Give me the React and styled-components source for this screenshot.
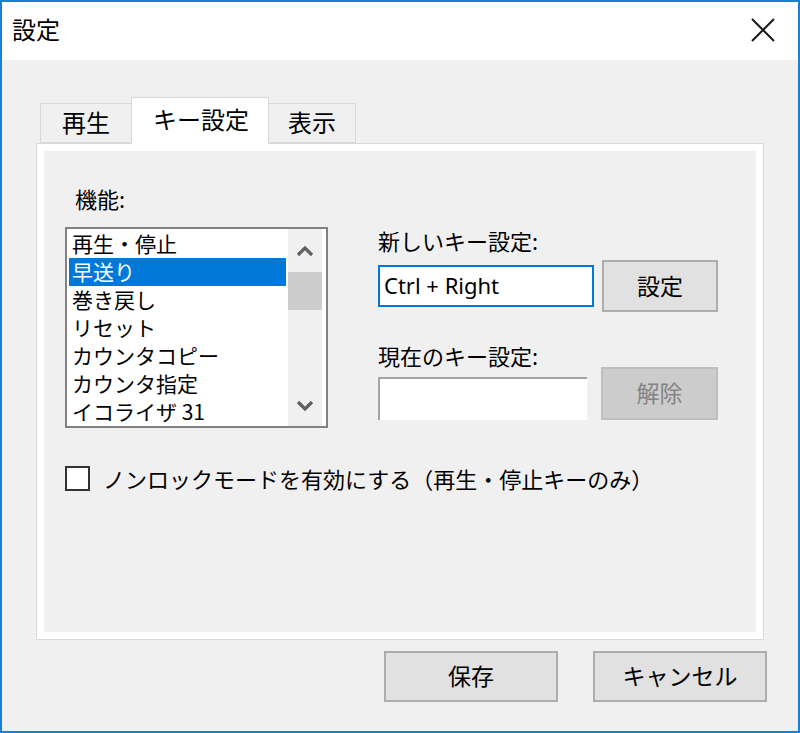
import React, { useState } from 'react'
import styled, { createGlobalStyle } from 'styled-components'

const Global = createGlobalStyle`
  html, body { margin: 0; padding: 0; background: #ffffff; }
  * { box-sizing: border-box; }
  body { font-family: "Noto Sans CJK JP", "Noto Sans", sans-serif; color: #000; }
`

const Window = styled.div`
  width: 800px;
  height: 733px;
  border: 2px solid #1b7fd6;
  display: flex;
  flex-direction: column;
  background: #f0f0f0;
`
const TitleBar = styled.div`
  height: 58px;
  background: #ffffff;
  display: flex;
  align-items: center;
  justify-content: space-between;
  padding: 0 22px 5px 10px;
  font-size: 24px;
`
const CloseBtn = styled.div`
  width: 26px;
  height: 26px;
  display: flex;
  align-items: center;
  justify-content: center;
  margin-top: 2px;
`
const Body = styled.div`
  flex: 1;
  display: flex;
  flex-direction: column;
  padding: 37px 0 0 34px;
`
const TabRow = styled.div`
  display: flex;
  align-items: flex-end;
  height: 46px;
  padding-left: 4px;
  position: relative;
  z-index: 1;
`
const Tab = styled.div`
  height: ${(p) => (p.$active ? '47px' : '40px')};
  margin-bottom: ${(p) => (p.$active ? '-1px' : '0')};
  width: ${(p) => p.$w}px;
  background: ${(p) => (p.$active ? '#ffffff' : '#f0f0f0')};
  border: 1px solid #d9d9d9;
  border-bottom: ${(p) => (p.$active ? 'none' : '1px solid #d9d9d9')};
  margin-left: ${(p) => (p.$active ? '-1px' : '0')};
  margin-right: ${(p) => (p.$active ? '-1px' : '0')};
  display: flex;
  align-items: center;
  justify-content: center;
  font-size: 24px;
  line-height: 1;
  padding-bottom: ${(p) => (p.$active ? '5px' : '2px')};
  padding-left: ${(p) => (p.$active ? '2px' : '0')};
`
const Panel = styled.div`
  width: 728px;
  height: 497px;
  border: 1px solid #d9d9d9;
  background: #ffffff;
  padding: 7px;
`
const Page = styled.div`
  height: 100%;
  background: #f0f0f0;
  padding: 33px 0 0 21px;
  display: flex;
  flex-direction: column;
`
const TopRow = styled.div`
  display: flex;
`
const LeftCol = styled.div`
  display: flex;
  flex-direction: column;
`
const Label = styled.div`
  font-size: 22px;
  line-height: ${(p) => p.$lh || 28}px;
  padding-left: ${(p) => p.$indent || 0}px;
  margin-bottom: ${(p) => p.$mb || 0}px;
  margin-top: ${(p) => p.$mt || 0}px;
`
const ListBox = styled.div`
  width: 263px;
  height: 201px;
  border: 2px solid #828282;
  background: #ffffff;
  display: flex;
`
const Items = styled.div`
  flex: 1;
  padding: 1px 2px 0 2px;
  overflow: hidden;
`
const Item = styled.div`
  height: 28px;
  line-height: 27px;
  font-size: 21px;
  padding-left: 3px;
  white-space: nowrap;
  background: ${(p) => (p.$sel ? '#0078d7' : 'transparent')};
  color: ${(p) => (p.$sel ? '#ffffff' : '#000000')};
`
const ScrollBar = styled.div`
  width: 34px;
  margin-right: 4px;
  background: #f0f0f0;
  display: flex;
  flex-direction: column;
`
const Arrow = styled.div`
  height: ${(p) => p.$h}px;
  display: flex;
  align-items: center;
  justify-content: center;
`
const Track = styled.div`
  flex: 1;
`
const Thumb = styled.div`
  height: 38px;
  background: #cdcdcd;
`
const RightCol = styled.div`
  margin-left: 50px;
  margin-top: 44px;
  display: flex;
  flex-direction: column;
`
const FieldRow = styled.div`
  display: flex;
  align-items: ${(p) => p.$align || 'center'};
  gap: ${(p) => p.$gap}px;
  margin-top: ${(p) => p.$mt || 0}px;
`
const TextBox = styled.div`
  width: ${(p) => p.$w}px;
  height: ${(p) => p.$h}px;
  background: #ffffff;
  border: ${(p) => (p.$focus ? '2px solid #0078d7' : 'none')};
  border-top: ${(p) => (p.$focus ? '2px solid #0078d7' : '2px solid #a3a3a3')};
  border-left: ${(p) => (p.$focus ? '2px solid #0078d7' : '2px solid #a3a3a3')};
  font-family: "Noto Sans", "Noto Sans CJK JP", sans-serif;
  font-size: 22px;
  display: flex;
  align-items: center;
  padding-left: 4px;
  padding-bottom: 2px;
`
const Button = styled.div`
  width: ${(p) => p.$w}px;
  height: ${(p) => p.$h}px;
  background: ${(p) => (p.$disabled ? '#cccccc' : '#e1e1e1')};
  border: 2px solid ${(p) => (p.$disabled ? '#bfbfbf' : '#adadad')};
  color: ${(p) => (p.$disabled ? '#838383' : '#000000')};
  display: flex;
  align-items: center;
  justify-content: center;
  font-size: 23px;
  padding-bottom: 3px;
`
const CheckRow = styled.div`
  display: flex;
  align-items: center;
  gap: 13px;
  margin-top: 34px;
  font-size: 22px;
`
const CheckBox = styled.div`
  width: 25px;
  height: 25px;
  border: 2px solid #333333;
  background: #ffffff;
`
const Footer = styled.div`
  display: flex;
  justify-content: flex-end;
  gap: 35px;
  margin-top: 11px;
  padding-right: 31px;
`

const Chevron = ({ up }) => (
  <svg width="18" height="12" viewBox="0 0 18 12">
    <path
      d={up ? 'M2 10 L9 3 L16 10' : 'M2 2 L9 9 L16 2'}
      fill="none"
      stroke="#606060"
      strokeWidth="3.2"
    />
  </svg>
)

const functions = [
  '再生・停止',
  '早送り',
  '巻き戻し',
  'リセット',
  'カウンタコピー',
  'カウンタ指定',
  'イコライザ 31',
]

const App = () => {
  const [selected, setSelected] = useState(1)
  return (
    <Window>
      <Global />
      <TitleBar>
        <span>設定</span>
        <CloseBtn>
          <svg width="26" height="26" viewBox="0 0 26 26">
            <path d="M2 2 L24 24 M24 2 L2 24" stroke="#1a1a1a" strokeWidth="2" />
          </svg>
        </CloseBtn>
      </TitleBar>
      <Body>
        <TabRow>
          <Tab $w={92}>再生</Tab>
          <Tab $w={138} $active>キー設定</Tab>
          <Tab $w={88}>表示</Tab>
        </TabRow>
        <Panel>
          <Page>
            <TopRow>
              <LeftCol>
                <Label $indent={10} $mb={15}>機能:</Label>
                <ListBox>
                  <Items>
                    {functions.map((f, i) => (
                      <Item key={f} $sel={i === selected} onClick={() => setSelected(i)}>
                        {f}
                      </Item>
                    ))}
                  </Items>
                  <ScrollBar>
                    <Arrow $h={43}><Chevron up /></Arrow>
                    <Track><Thumb /></Track>
                    <Arrow $h={40}><Chevron /></Arrow>
                  </ScrollBar>
                </ListBox>
              </LeftCol>
              <RightCol>
                <Label $lh={24}>新しいキー設定:</Label>
                <FieldRow $gap={8} $mt={8}>
                  <TextBox $w={216} $h={42} $focus>Ctrl + Right</TextBox>
                  <Button $w={116} $h={52}>設定</Button>
                </FieldRow>
                <Label $lh={24} $mt={31}>現在のキー設定:</Label>
                <FieldRow $gap={14} $align="flex-end">
                  <TextBox $w={209} $h={43} />
                  <Button $w={117} $h={53} $disabled>解除</Button>
                </FieldRow>
              </RightCol>
            </TopRow>
            <CheckRow>
              <CheckBox />
              <span>ノンロックモードを有効にする（再生・停止キーのみ）</span>
            </CheckRow>
          </Page>
        </Panel>
        <Footer>
          <Button $w={174} $h={51}>保存</Button>
          <Button $w={174} $h={51}>キャンセル</Button>
        </Footer>
      </Body>
    </Window>
  )
}

export default App
